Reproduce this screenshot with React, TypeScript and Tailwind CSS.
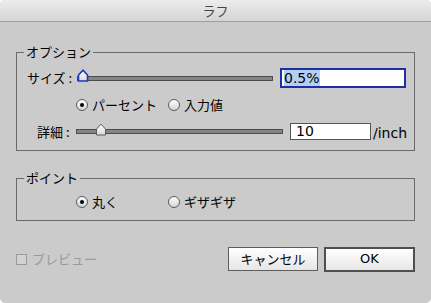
import React from 'react';

const jp = "font-['Noto_Sans_CJK_JP',sans-serif]";
const lat = "font-['DejaVu_Sans','Noto_Sans_CJK_JP',sans-serif]";

const Thumb: React.FC<{ focused?: boolean }> = ({ focused }) => (
  <svg width="12" height="13" viewBox="0 0 12 13">
    <defs>
      <linearGradient id={focused ? 'tf' : 'tn'} x1="0" y1="0" x2="0" y2="1">
        <stop offset="0" stopColor="#ffffff" />
        <stop offset="1" stopColor="#d9d9d9" />
      </linearGradient>
    </defs>
    <path
      d="M1.5 12 V6 L6 1.2 L10.5 6 V12 Z"
      fill={`url(#${focused ? 'tf' : 'tn'})`}
      stroke={focused ? '#1f34c0' : '#5a5a5a'}
      strokeWidth={focused ? 1.6 : 1}
      strokeLinejoin="miter"
    />
  </svg>
);

const Slider: React.FC<{ width: string; pos: string; focused?: boolean }> = ({ width, pos, focused }) => (
  <div className={`relative flex h-[20px] items-center ${width}`}>
    <div className="h-[5px] w-full border border-[#4c4c4c] bg-[#858585]" />
    <div className={`absolute top-[1px] ${pos}`}>
      <Thumb focused={focused} />
    </div>
  </div>
);

const Radio: React.FC<{ checked?: boolean; label: string; width?: string }> = ({ checked, label, width }) => (
  <div className={`flex items-center gap-[4px] ${width ?? ''}`}>
    <div className="flex h-[12px] w-[12px] items-center justify-center rounded-full border border-[#5c5c5c] bg-gradient-to-b from-white to-[#d4d4d4]">
      {checked && <div className="h-[4px] w-[4px] rounded-full bg-black" />}
    </div>
    <span className="text-[13px] leading-[16px] text-black">{label}</span>
  </div>
);

export default function App() {
  return (
    <div className="h-[303px] w-[431px] bg-white">
      <div className={`flex h-[303px] w-[431px] flex-col overflow-hidden rounded-[5px] bg-[#cbcbcb] ${jp}`}>
        {/* title bar */}
        <div className="flex h-[22px] items-center justify-center border-b border-[#a0a0a0] bg-gradient-to-b from-[#ececec] to-[#d5d5d5]">
          <span className="text-[13px] leading-[16px] text-[#444]">ラフ</span>
        </div>

        <div className="flex flex-col px-[16px]">
          {/* オプション */}
          <fieldset className="mt-[22px] border border-[#6a6a6a] px-0 pb-[10px]">
            <legend className="ml-[7px] px-[2px] text-[13px] leading-[16px] text-black">オプション</legend>

            <div className="mt-[8px] flex h-[20px] items-center pl-[10px]">
              <span className="w-[50px] text-[13px] leading-[16px] text-black">サイズ :</span>
              <Slider width="w-[196px]" pos="left-0" focused />
              <div className="ml-[7px] flex h-[20px] w-[126px] items-center border-2 border-[#1d2fa6] bg-white pl-[2px]">
                <span className={`bg-[#b3cff4] text-[14px] leading-[16px] text-black ${lat}`}>0.5%</span>
              </div>
            </div>

            <div className="mt-[9px] flex h-[16px] items-center pl-[59px]">
              <Radio checked label="パーセント" width="w-[92px]" />
              <Radio label="入力値" />
            </div>

            <div className="mt-[10px] flex h-[17px] items-center pl-[20px]">
              <span className="w-[39px] text-[13px] leading-[16px] text-black">詳細 :</span>
              <Slider width="w-[207px]" pos="left-[19px]" />
              <div className="ml-[7px] flex h-[17px] w-[81px] items-center border border-[#555] bg-white pl-[5px]">
                <span className={`text-[14px] leading-[15px] text-black ${lat}`}>10</span>
              </div>
              <span className={`ml-[2px] mt-[3px] text-[14px] leading-[16px] text-black ${lat}`}>/inch</span>
            </div>
          </fieldset>

          {/* ポイント */}
          <fieldset className="mt-[19px] border border-[#6a6a6a] px-0 pb-[10px]">
            <legend className="ml-[7px] px-[2px] text-[13px] leading-[16px] text-black">ポイント</legend>
            <div className="mt-[8px] flex h-[16px] items-center pl-[59px]">
              <Radio checked label="丸く" width="w-[92px]" />
              <Radio label="ギザギザ" />
            </div>
          </fieldset>

          {/* bottom row */}
          <div className="mt-[26px] flex h-[24px] items-center">
            <div className="flex items-center gap-[5px]">
              <div className="h-[11px] w-[11px] border border-[#9a9a9a] bg-[#d2d2d2]" />
              <span className="text-[13px] leading-[16px] text-[#9a9a9a]">プレビュー</span>
            </div>
            <div className="ml-auto flex gap-[6px]">
              <button className="flex h-[24px] w-[90px] items-center justify-center border border-[#5e5e5e] bg-gradient-to-b from-white to-[#e6e6e6] text-[13px] leading-[16px] text-black">
                キャンセル
              </button>
              <button className={`flex h-[25px] w-[91px] items-center justify-center border-2 border-[#4f4f4f] bg-gradient-to-b from-white to-[#e6e6e6] text-[13px] leading-[16px] text-black ${lat}`}>
                OK
              </button>
            </div>
          </div>
        </div>
      </div>
    </div>
  );
}
